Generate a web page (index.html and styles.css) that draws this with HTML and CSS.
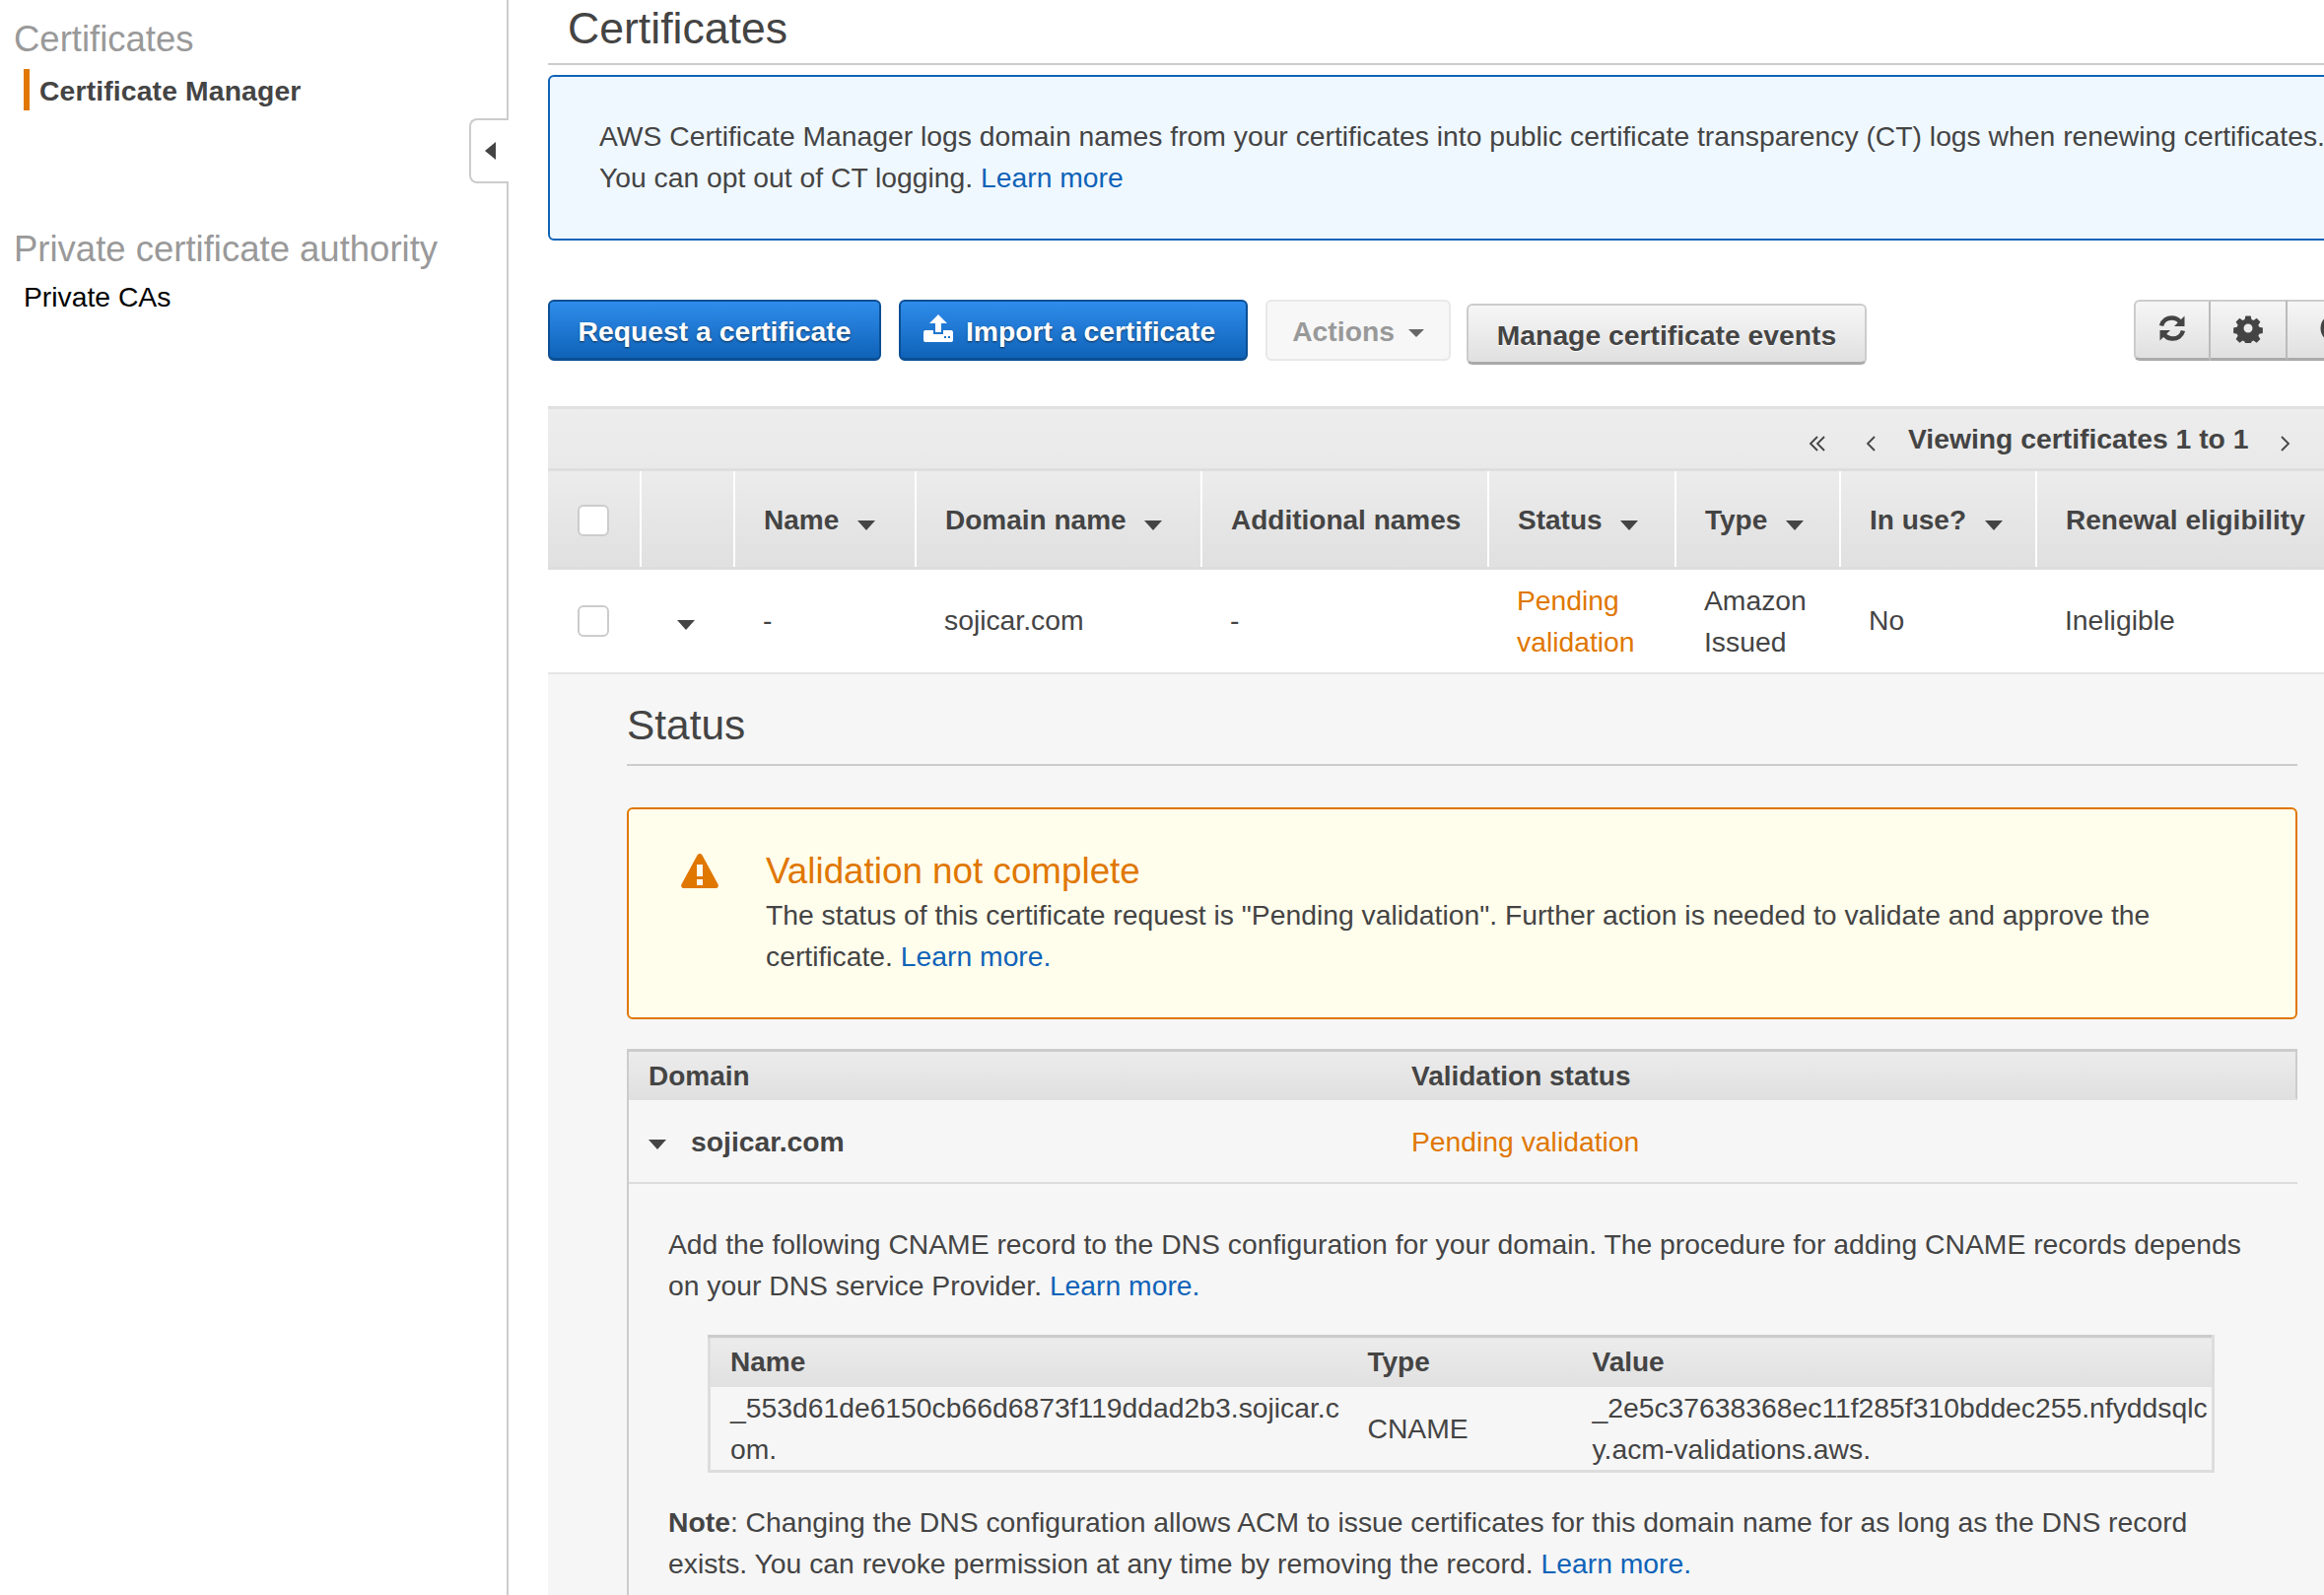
FILE: index.html
```html
<!DOCTYPE html>
<html lang="en">
<head>
  <meta charset="UTF-8" />
  <title>Certificates</title>
  <link rel="stylesheet" href="styles.css">
</head>
<body>

<aside class="sidebar">
  <h3 class="side-title">Certificates</h3>
  <a class="side-link side-active">Certificate Manager</a>
  <h3 class="side-title side-second">Private certificate authority</h3>
  <a class="side-link">Private CAs</a>
  <div class="side-toggle"><span class="toggle-arrow"></span></div>
</aside>

<main class="content">
  <div class="page-head">
    <h1>Certificates</h1>
  </div>

  <div class="info-box">
    <p>AWS Certificate Manager logs domain names from your certificates into public certificate transparency (CT) logs when renewing certificates.</p>
    <p>You can opt out of CT logging. <a>Learn more</a></p>
  </div>

  <div class="toolbar">
    <button class="btn btn-primary btn-request">Request a certificate</button>
    <button class="btn btn-primary btn-import">
      <svg class="upload-icon" width="30" height="28" viewBox="0 0 30 28">
        <path fill="#fff" d="M15 0l9 9h-6v9h-6V9H6z"/>
        <path fill="#fff" fill-rule="evenodd" d="M2 16h8v4h10v-4h8a2 2 0 0 1 2 2v8a2 2 0 0 1-2 2H2a2 2 0 0 1-2-2v-8a2 2 0 0 1 2-2zM21 22v2h2v-2zM25 22v2h2v-2z"/>
      </svg>
      Import a certificate
    </button>
    <button class="btn btn-disabled">Actions <span class="caret caret-light"></span></button>
    <button class="btn btn-default btn-manage">Manage certificate events</button>
    <div class="icon-group">
      <button class="icon-btn">
        <svg width="30" height="30" viewBox="0 0 30 30">
          <path fill="none" stroke="#444" stroke-width="4.5" d="M4 12.5C5.5 7 10 4.5 14.500 4.500c3.500 0 6.500 1.500 8.500 4"/>
          <path fill="#444" d="M27.500 2.500v10.500h-10.500z"/>
          <path fill="none" stroke="#444" stroke-width="4.500" d="M26 17.500c-1.500 5.500-6 8-10.500 8-3.500 0-6.500-1.500-8.500-4"/>
          <path fill="#444" d="M2.500 27.500v-10.500h10.500z"/>
        </svg>
      </button>
      <button class="icon-btn">
        <svg width="30" height="30" viewBox="0 0 30 30">
          <path fill="#444" fill-rule="evenodd" d="M12 1h6l.8 4 2.400 1 3.400-2.300 4.200 4.200-2.300 3.400 1 2.400 4 .8v6l-4 .8-1 2.400 2.300 3.400-4.200 4.200-3.400-2.300-2.400 1-.8 4h-6l-.8-4-2.400-1-3.400 2.300-4.200-4.200 2.300-3.400-1-2.400-4-.8v-6l4-.8 1-2.400-2.300-3.400 4.200-4.200 3.400 2.300 2.400-1zM15 10a5 5 0 1 0 0 10 5 5 0 0 0 0-10z" transform="translate(1.500 1.500) scale(.9)"/>
        </svg>
      </button>
      <button class="icon-btn">
        <svg width="30" height="30" viewBox="0 0 30 30">
          <circle cx="15" cy="15" r="12" fill="none" stroke="#444" stroke-width="5"/>
        </svg>
      </button>
    </div>
  </div>

  <div class="pager">
    <svg class="pager-arrow pager-first" width="18" height="18" viewBox="0 0 18 18">
      <path fill="none" stroke="#444" stroke-width="1.800" d="M9 2L2 9l7 7M16 2L9 9l7 7"/>
    </svg>
    <svg class="pager-arrow pager-prev" width="12" height="18" viewBox="0 0 12 18">
      <path fill="none" stroke="#444" stroke-width="1.800" d="M10 2L3 9l7 7"/>
    </svg>
    <span class="pager-text">Viewing certificates 1 to 1</span>
    <svg class="pager-arrow pager-next" width="12" height="18" viewBox="0 0 12 18">
      <path fill="none" stroke="#444" stroke-width="1.800" d="M2 2l7 7-7 7"/>
    </svg>
  </div>

  <table class="cert-table">
    <colgroup>
      <col class="col-check"><col class="col-expand"><col class="col-name"><col class="col-domain"><col class="col-names">
      <col class="col-status"><col class="col-type"><col class="col-use"><col class="col-renew">
    </colgroup>
    <thead>
      <tr>
        <th><span class="checkbox"></span></th>
        <th></th>
        <th>Name <span class="caret"></span></th>
        <th>Domain name <span class="caret"></span></th>
        <th>Additional names</th>
        <th>Status <span class="caret"></span></th>
        <th>Type <span class="caret"></span></th>
        <th>In use? <span class="caret"></span></th>
        <th>Renewal eligibility <span class="caret"></span></th>
      </tr>
    </thead>
    <tbody>
      <tr>
        <td class="cell-check"><span class="checkbox"></span></td>
        <td class="cell-expand"><span class="caret"></span></td>
        <td>-</td>
        <td>sojicar.com</td>
        <td>-</td>
        <td class="pending cell-wrap">Pending validation</td>
        <td class="cell-wrap">Amazon Issued</td>
        <td>No</td>
        <td>Ineligible</td>
      </tr>
    </tbody>
  </table>

  <section class="detail">
    <div class="detail-inner">
      <h2>Status</h2>

      <div class="warn-box">
        <svg class="warn-icon" width="38" height="35" viewBox="0 0 38 35">
          <path fill="#e07700" fill-rule="evenodd" d="M16.500 1.500c1.200-2 3.800-2 5 0l16 29.500c1 2-.2 4-2.500 4H3c-2.300 0-3.500-2-2.500-4zM16 11v12h6V11zM16 26v6h6v-6z"/>
        </svg>
        <div class="warn-text">
          <h4>Validation not complete</h4>
          <p>The status of this certificate request is "Pending validation". Further action is needed to validate and approve the certificate. <a>Learn more.</a></p>
        </div>
      </div>

      <div class="domain-box">
        <div class="domain-head">
          <span class="domain-col">Domain</span>
          <span>Validation status</span>
        </div>
        <div class="domain-row">
          <span class="domain-col domain-name"><span class="caret"></span><b>sojicar.com</b></span>
          <span class="pending">Pending validation</span>
        </div>
        <div class="domain-body">
          <p>Add the following CNAME record to the DNS configuration for your domain. The procedure for adding CNAME records depends on your DNS service Provider. <a>Learn more.</a></p>
          <table class="cname-table">
            <colgroup><col class="cname-name"><col class="cname-type"><col class="cname-value"></colgroup>
            <thead>
              <tr><th>Name</th><th>Type</th><th>Value</th></tr>
            </thead>
            <tbody>
              <tr>
                <td>_553d61de6150cb66d6873f119ddad2b3.sojicar.c<wbr>om.</td>
                <td>CNAME</td>
                <td>_2e5c37638368ec11f285f310bddec255.nfyddsqlc<wbr>y.acm-validations.aws.</td>
              </tr>
            </tbody>
          </table>
          <p class="note"><b>Note</b>: Changing the DNS configuration allows ACM to issue certificates for this domain name for as long as the DNS record exists. You can revoke permission at any time by removing the record. <a>Learn more.</a></p>
        </div>
      </div>
    </div>
  </section>
</main>

</body>
</html>
```

FILE: styles.css
```css
html, body {
  height: 100%;
}
body {
  margin: 0;
  display: flex;
  width: 2358px;
  height: 1618px;
  overflow: hidden;
  background-color: #fff;
  font-family: "Liberation Sans", Arial, sans-serif;
  font-size: 28.3px;
  line-height: 42px;
  color: #444;
}
a {
  color: #0f63b8;
}
p {
  margin: 0;
}

/* sidebar */
.sidebar {
  position: relative;
  flex: none;
  box-sizing: border-box;
  width: 516px;
  padding-top: 19px;
  border-right: 2px solid #ccc;
}
.side-title {
  margin: 0 0 0 14px;
  font-size: 36.5px;
  line-height: 42px;
  font-weight: normal;
  color: #999;
}
.side-second {
  margin-top: 120px;
}
.side-link {
  display: block;
  margin: 6px 0 0 24px;
  color: #000;
}
.side-active {
  margin-top: 9px;
  height: 42px;
  line-height: 44px;
  padding-left: 10px;
  border-left: 6px solid #e07700;
  font-weight: bold;
  letter-spacing: 0.15px;
  color: #444;
}
.side-toggle {
  position: absolute;
  top: 120px;
  right: -2px;
  box-sizing: border-box;
  width: 40px;
  height: 66px;
  display: flex;
  align-items: center;
  padding-left: 14px;
  background-color: #fff;
  border: 2px solid #ccc;
  border-right: none;
  border-radius: 8px 0 0 8px;
}
.toggle-arrow {
  border-top: 9px solid transparent;
  border-bottom: 9px solid transparent;
  border-right: 11px solid #444;
}

/* main */
.content {
  flex: none;
  width: 1950px;
  padding-left: 40px;
}
.page-head {
  height: 64px;
  border-bottom: 2px solid #ccc;
  padding-left: 20px;
}
.page-head h1 {
  margin: 0;
  font-size: 44.6px;
  line-height: 58px;
  font-weight: normal;
}
.info-box {
  box-sizing: border-box;
  height: 168px;
  margin-top: 10px;
  padding: 39px 50px;
  white-space: nowrap;
  background-color: #f0f8ff;
  border: 2px solid #0f63b8;
  border-radius: 6px;
}

/* buttons */
.toolbar {
  display: flex;
  align-items: flex-start;
  margin-top: 60px;
  height: 108px;
  padding-right: 107px;
}
.btn {
  box-sizing: border-box;
  height: 62px;
  margin-right: 18px;
  padding: 3px 0 0;
  font-family: inherit;
  font-size: 28.3px;
  font-weight: bold;
  border-radius: 6px;
}
.btn-primary {
  color: #fff;
  text-shadow: 0 1px 2px rgba(0,0,0,0.6);
  background: linear-gradient(#2f8ceb, #0f63b8);
  border: 2px solid #0b4f94;
  border-bottom-width: 3px;
}
.btn-request {
  width: 338px;
}
.btn-import {
  width: 354px;
  display: flex;
  align-items: center;
  padding-left: 23px;
  gap: 13px;
}
.upload-icon {
  margin-top: -6px;
}
.btn-disabled {
  width: 188px;
  color: #999;
  background-color: #f7f7f7;
  border: 2px solid #e8e8e8;
  margin-right: 16px;
}
.btn-default {
  color: #444;
  text-shadow: 0 1px 1px #fff;
  background: linear-gradient(#f6f6f6, #e0e0e0);
  border: 2px solid #ccc;
  border-bottom: 3px solid #aaa;
}
.btn-manage {
  width: 406px;
  margin-top: 4px;
  margin-right: 0;
}
.icon-group {
  display: flex;
  margin-left: auto;
}
.icon-btn {
  box-sizing: border-box;
  width: 78px;
  height: 62px;
  padding: 0 0 4px;
  background: linear-gradient(#f6f6f6, #e0e0e0);
  border: 2px solid #ccc;
  border-bottom: 3px solid #aaa;
  border-left: none;
  border-right-color: #bbb;
}
.icon-btn svg {
  display: block;
  margin: auto;
}
.icon-btn:first-child {
  border-left: 2px solid #ccc;
  border-radius: 6px 0 0 6px;
}
.icon-btn:last-child svg {
  margin-left: 33px;
}

/* table */
.pager {
  display: flex;
  align-items: center;
  box-sizing: border-box;
  height: 66px;
  background: linear-gradient(#ededed, #e9e9e9);
  border-top: 3px solid #e0e0e0;
  border-bottom: 3px solid #dedede;
}
.pager-text {
  font-weight: bold;
  margin: 0 32px 0 32px;
}
.pager-first {
  margin-left: 1279px;
  margin-top: 10px;
}
.pager-prev {
  margin-left: 39px;
  margin-top: 10px;
}
.pager-next {
  margin-top: 10px;
}
.cert-table {
  table-layout: fixed;
  width: 1910px;
  border-collapse: collapse;
}
.col-check { width: 94px; }
.col-expand { width: 95px; }
.col-name { width: 184px; }
.col-domain { width: 290px; }
.col-names { width: 291px; }
.col-status { width: 190px; }
.col-type { width: 167px; }
.col-use { width: 199px; }
.col-renew { width: 400px; }
.cert-table th {
  height: 95px;
  padding: 2px 0 0 29px;
  font-size: 28px;
  text-align: left;
  white-space: nowrap;
  background: linear-gradient(#ececec, #e0e0e0);
  border-left: 2px solid #fff;
  border-right: 1px solid #ccc;
  border-bottom: 3px solid #ddd;
}
.cert-table th:first-child {
  border-left: none;
  padding-left: 30px;
}
.cert-table td {
  height: 101px;
  padding: 0 0 3px 29px;
  border-bottom: 2px solid #e5e5e5;
}
.cert-table td.cell-wrap {
  padding-bottom: 0;
}
.cert-table td.cell-check {
  padding: 0 0 0 30px;
}
.pending {
  color: #e07700;
}
.checkbox {
  display: block;
  box-sizing: border-box;
  width: 32px;
  height: 32px;
  background-color: #fff;
  border: 2px solid #ccc;
  border-radius: 6px;
}
.caret {
  display: inline-block;
  margin-left: 11px;
  vertical-align: -1px;
  border-left: 9px solid transparent;
  border-right: 9px solid transparent;
  border-top: 10px solid #444;
}
.caret-light {
  margin-left: 6px;
  border-left-width: 8px;
  border-right-width: 8px;
  border-top: 8px solid #666;
  vertical-align: 4px;
}
.cell-expand .caret {
  margin-left: 8px;
  vertical-align: 0;
}

/* status detail */
.detail {
  background-color: #f6f6f6;
  height: 935px;
  padding-left: 80px;
}
.detail-inner {
  width: 1695px;
}
.detail h2 {
  margin: 0;
  padding-top: 31px;
  height: 60px;
  font-size: 42.4px;
  line-height: 42px;
  font-weight: normal;
  border-bottom: 2px solid #ccc;
}
.warn-box {
  display: flex;
  box-sizing: border-box;
  height: 215px;
  margin-top: 42px;
  padding: 45px 53px 0;
  background-color: #fffdec;
  border: 2px solid #e07700;
  border-radius: 6px;
}
.warn-icon {
  flex: none;
  margin-right: 48px;
  margin-top: 0;
}
.warn-text {
  margin-top: -3px;
}
.warn-text h4 {
  margin: 0;
  font-size: 36.8px;
  line-height: 42px;
  font-weight: normal;
  color: #e07700;
}
.warn-text p {
  margin-top: 2px;
}

.domain-box {
  margin-top: 30px;
  padding-bottom: 60px;
  border-left: 2px solid #ccc;
}
.domain-head, .domain-row {
  display: flex;
  align-items: center;
}
.domain-head {
  height: 52px;
  padding-top: 3px;
  font-size: 28px;
  font-weight: bold;
  background: linear-gradient(#ececec, #e0e0e0);
  border-top: 3px solid #ccc;
  border-right: 2px solid #ccc;
  border-bottom: 3px solid #e0e0e0;
  box-sizing: border-box;
}
.domain-col {
  width: 794px;
  box-sizing: border-box;
  padding-left: 20px;
}
.domain-row {
  height: 85px;
  box-sizing: border-box;
  border-bottom: 2px solid #ddd;
}
.domain-name {
  display: flex;
  align-items: center;
  gap: 25px;
}
.domain-name .caret {
  margin-left: 0;
  margin-top: 6px;
}
.domain-body {
  padding: 40px 46px 0 40px;
}
.cname-table {
  table-layout: fixed;
  width: 1529px;
  margin: 29px 0 29px 40px;
  border-collapse: collapse;
  border: 3px solid #ddd;
  border-top-color: #ccc;
}
.cname-name { width: 648px; }
.cname-type { width: 228px; }
.cname-table th {
  height: 50px;
  padding: 0 0 0 20px;
  font-size: 28px;
  text-align: left;
  background: linear-gradient(#ececec, #e0e0e0);
}
.cname-table td {
  padding: 0 0 0 20px;
}
```
